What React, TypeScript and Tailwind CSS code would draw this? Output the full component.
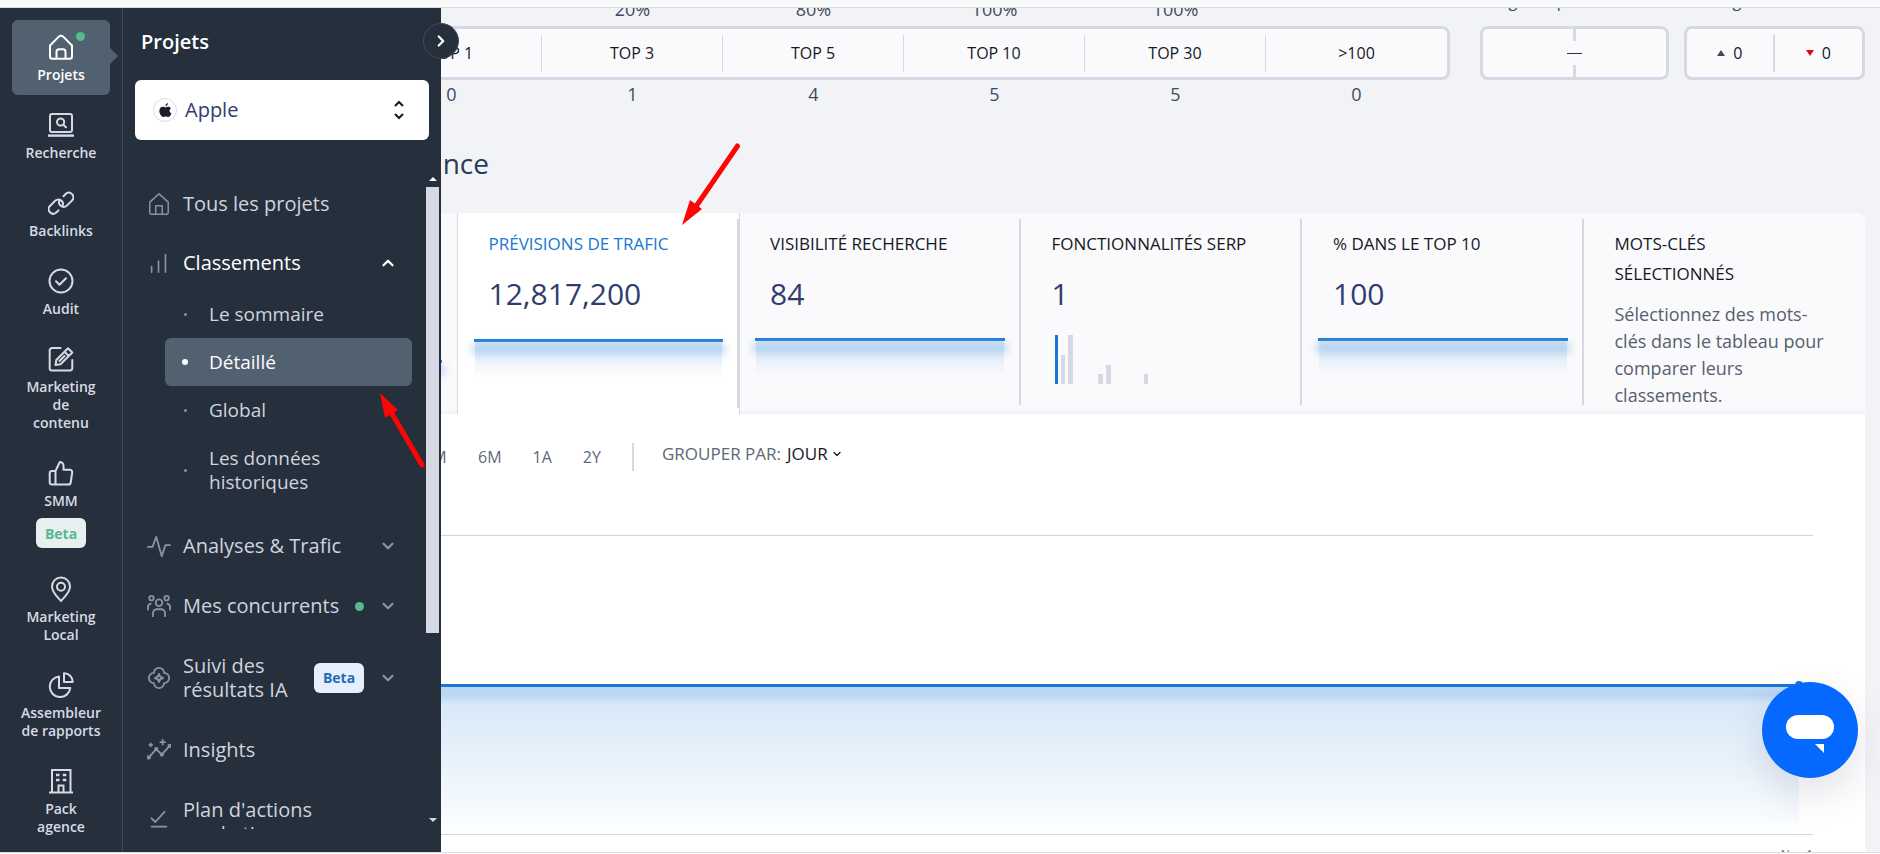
import type { ReactNode } from 'react';
import { ChevronDown, ChevronRight, ChevronUp } from 'lucide-react';

const Icon = ({ size = 26, width = 1.8, children }: { size?: number; width?: number; children: ReactNode }) => (
  <svg
    width={size}
    height={size}
    viewBox="0 0 26 26"
    fill="none"
    stroke="currentColor"
    strokeWidth={width}
    strokeLinecap="round"
    strokeLinejoin="round"
    aria-hidden="true"
    className="shrink-0"
  >
    {children}
  </svg>
);

const railItems = [
  {
    label: 'Projets',
    active: true,
    icon: (
      <path d="M2 11.5 10.8 2.6a3 3 0 0 1 4.4 0L24 11.500V22.500a2.300 2.300 0 0 1-2.300 2.300H4.300A2.300 2.300 0 0 1 2 22.500ZM8.500 24.800v-7a2.500 2.500 0 0 1 2.500-2.500h4a2.500 2.500 0 0 1 2.500 2.500v7" />
    ),
  },
  {
    label: 'Recherche',
    icon: (
      <>
        <rect x="2" y="2" width="22" height="18" rx="2" />
        <path d="M0 23.600h26" strokeLinecap="butt" strokeWidth="2.4" />
        <circle cx="12.600" cy="10" r="3.600" />
        <path d="m15.300 12.700 2.700 2.500" />
      </>
    ),
  },
  {
    label: 'Backlinks',
    icon: (
      <path d="M15.500 6.200 18 3.600a4.600 4.600 0 0 1 6.300 6.600l-5.500 5.400a4.600 4.600 0 0 1-6.600-.2 4 4 0 0 1-.8-4.400M10.500 20.400 8 22.800a4.600 4.600 0 0 1-6.300-6.600l5.500-5.400a4.600 4.600 0 0 1 6.600.2 4 4 0 0 1 .8 4.400" />
    ),
  },
  {
    label: 'Audit',
    icon: (
      <>
        <circle cx="13" cy="13" r="11.500" />
        <path d="m8 13.200 3.500 3.500 6.500-6.500" />
      </>
    ),
  },
  {
    label: 'Marketing\nde\ncontenu',
    icon: (
      <>
        <path d="M12.500 2H4a2.300 2.300 0 0 0-2.300 2.300v17.900A2.300 2.300 0 0 0 4 24.500h18a2.300 2.300 0 0 0 2.300-2.300V14" />
        <path d="m7.500 19 .8-5L20 2.300l4.300 4.200-11.800 11.700ZM16.500 5.800l4.300 4.200M11.500 15l5-5" />
      </>
    ),
  },
  {
    label: 'SMM',
    badge: 'Beta',
    icon: (
      <path d="M7.500 24.500H4a2.300 2.300 0 0 1-2.300-2.300v-9A2.300 2.300 0 0 1 4 11h3.500Zm0-13.500 4.300-9c2 0 3.700 1.500 3.700 3.600v4.200h6.400a2.300 2.300 0 0 1 2.300 2.700l-1.500 10a2.300 2.300 0 0 1-2.300 2H7.500" />
    ),
  },
  {
    label: 'Marketing\nLocal',
    icon: (
      <>
        <path d="M13 25c-1.500-2.200-9-8-9-14.500a9 9 0 0 1 18 0C22 17 14.500 22.800 13 25Z" />
        <circle cx="13" cy="10.800" r="4" />
      </>
    ),
  },
  {
    label: 'Assembleur\nde rapports',
    icon: (
      <>
        <path d="M11 4.500A10.300 10.300 0 1 0 22.300 16H11Z" />
        <path d="M16 1.200v8.700h8.700A8.700 8.700 0 0 0 16 1.200Z" />
      </>
    ),
  },
  {
    label: 'Pack\nagence',
    icon: (
      <>
        <path d="M4 24V2h18.500v22M1 24.500h24M10.500 24v-6.500h5V24" strokeLinejoin="miter" strokeLinecap="butt" />
        <path d="M8 7h3.500M14.800 7h3.500M8 12h3.500M14.800 12h3.500" strokeWidth="2.400" strokeLinecap="butt" />
      </>
    ),
  },
];

const subItems = [
  { label: 'Le sommaire' },
  { label: 'Détaillé', active: true },
  { label: 'Global' },
  { label: 'Les données historiques' },
];

const menuItems = [
  {
    label: 'Analyses & Trafic',
    chevron: true,
    icon: <path d="M1 14h5L10 3l6 21 4-12h5" />,
  },
  {
    label: 'Mes concurrents',
    chevron: true,
    dot: true,
    icon: (
      <>
        <circle cx="13" cy="9.500" r="3.600" />
        <circle cx="4.800" cy="4.500" r="2.400" />
        <circle cx="21.200" cy="4.500" r="2.400" />
        <path d="M6.500 24v-3.500a4 4 0 0 1 4-4h5a4 4 0 0 1 4 4V24M1 17v-2.500a4 4 0 0 1 3-4M25 17v-2.500a4 4 0 0 0-3-4" />
      </>
    ),
  },
  {
    label: 'Suivi des résultats IA',
    chevron: true,
    badge: 'Beta',
    icon: (
      <>
        <path d="M7.500 7.500a5.500 5.500 0 0 1 11 0 5.500 5.500 0 0 1 0 11 5.500 5.500 0 0 1-11 0 5.500 5.500 0 0 1 0-11Z" />
        <path d="M13 8.500c.5 3 1.500 4 4.500 4.500-3 .5-4 1.500-4.500 4.500-.5-3-1.500-4-4.500-4.500 3-.5 4-1.500 4.500-4.500Z" />
      </>
    ),
  },
  {
    label: 'Insights',
    icon: (
      <>
        <path d="m2 21 8-9 6 6 9-10M17 2v5M14.500 4.500h5M4 6v3M2.500 7.500h3" />
        <g fill="currentColor">
          <circle cx="2" cy="21" r="1.300" />
          <circle cx="10" cy="12" r="1.300" />
          <circle cx="16" cy="18" r="1.300" />
          <circle cx="24.500" cy="8.500" r="1.300" />
        </g>
      </>
    ),
  },
  {
    label: "Plan d'actions marketing",
    icon: <path d="m5 9 4 4 10-11M5 18h16M5 23h10" />,
  },
];

const positions = [
  { label: 'TOP 1', percent: '', count: '0' },
  { label: 'TOP 3', percent: '20%', count: '1' },
  { label: 'TOP 5', percent: '80%', count: '4' },
  { label: 'TOP 10', percent: '100%', count: '5' },
  { label: 'TOP 30', percent: '100%', count: '5' },
  { label: '>100', percent: '', count: '0' },
];

const ranges = ['3M', '6M', '1A', '2Y'];

const Rail = () => (
  <nav className="flex w-[123px] shrink-0 flex-col gap-[3px] border-r border-[#3f4a56] px-3 pt-3">
    {railItems.map((item) => (
      <a
        key={item.label}
        href="#"
        className={
          item.active
            ? 'relative flex w-[98px] shrink-0 flex-col items-center rounded-md bg-[#526170] pt-[14px] pb-[11px] text-white'
            : 'relative flex w-[98px] shrink-0 flex-col items-center pt-[14px] pb-[11px] text-[#d7dae5]'
        }
      >
        <Icon width={2}>{item.icon}</Icon>
        <span className="mt-[6px] text-center text-[14px] leading-[18px] font-semibold whitespace-pre-line">{item.label}</span>
        {item.badge && (
          <span className="mt-2 flex h-[30px] w-[50px] items-center justify-center rounded-md bg-[#e8f0ef] text-[14px] font-bold text-[#57b98d]">
            {item.badge}
          </span>
        )}
        {item.active && (
          <>
            <span className="absolute top-3 right-[25px] size-[9px] rounded-full bg-[#57b98d]" />
            <span className="absolute top-7 -right-2 border-y-8 border-l-8 border-y-transparent border-l-[#526170]" />
          </>
        )}
      </a>
    ))}
  </nav>
);

const Panel = () => (
  <div className="relative flex w-[318px] shrink-0 flex-col">
    <h2 className="mt-5 pl-[18px] text-[20px] leading-7 font-semibold text-white">Projets</h2>
    <button className="mt-6 mr-3 ml-3 flex h-[60px] items-center rounded-md bg-white pr-[23px] pl-[18px]">
      <span className="flex size-6 items-center justify-center rounded-full border border-[#d7dce2]">
        <svg width="13" height="15" viewBox="0 0 13 15" fill="#1b1e28" aria-hidden="true">
          <path d="M9 0c.1 1.500-1 3-2.500 3.200C6.300 1.700 7.500.3 9 0ZM12 5.200c-2 1.200-1.800 4.200.5 5.100-.6 1.700-1.700 3.700-3 3.700-1 0-1.500-.6-2.700-.6s-1.700.6-2.600.6C2.500 14 0 10.500.4 7.300.7 4.800 2.400 3.700 4 3.800c1 0 1.700.6 2.600.6.800 0 1.600-.7 2.900-.7 1 0 2 .6 2.500 1.500Z" />
        </svg>
      </span>
      <span className="ml-2 text-[20px] font-medium text-[#2f3d6e]">Apple</span>
      <svg className="ml-auto" width="14" height="20" viewBox="0 0 14 20" fill="none" stroke="#15191f" strokeWidth="2" aria-hidden="true">
        <path d="m3 6 4-4 4 4M3 14l4 4 4-4" />
      </svg>
    </button>
    <div className="mt-[34px] mb-[23px] flex min-h-0 flex-1">
      <div className="min-w-0 flex-1 overflow-hidden text-[20px] leading-6 font-medium text-[#d0d3df]">
        <a href="#" className="flex h-[60px] items-center pl-6">
          <span className="text-[#8b929d]">
            <Icon size={24} width={1.6}>
              <path d="M3 11 13 2l10 9v11.500a1.500 1.500 0 0 1-1.500 1.500h-17A1.500 1.500 0 0 1 3 22.500ZM9.500 24v-9h7v9" />
            </Icon>
          </span>
          <span className="ml-3">Tous les projets</span>
        </a>
        <button className="flex h-14 w-full items-center pt-[2px] pl-6 text-white">
          <span className="text-[#8b929d]">
            <Icon size={24}>
              <path d="M5 23v-6M12.500 23V11M20 23V4" />
            </Icon>
          </span>
          <span className="ml-3">Classements</span>
          <ChevronUp size={18} strokeWidth={3} className="mr-[29px] ml-auto" />
        </button>
        <ul className="mr-[14px] ml-[42px] text-[19px] font-normal">
          {subItems.map((item) => (
            <li key={item.label}>
              <a
                href="#"
                className={
                  item.active
                    ? 'flex min-h-12 items-center rounded-md bg-[#526170] py-3 pr-14 pl-[17px] font-medium text-white'
                    : 'flex min-h-12 items-center py-3 pr-14 pl-[17px]'
                }
              >
                <span className="flex w-[6px] shrink-0 justify-center">
                  <span className={item.active ? 'size-[6px] rounded-full bg-white' : 'size-[3px] rounded-full bg-[#8b929d]'} />
                </span>
                <span className="ml-[21px]">{item.label}</span>
              </a>
            </li>
          ))}
        </ul>
        <div className="mt-[10px]">
          {menuItems.map((item) => (
            <a key={item.label} href="#" className="flex min-h-[60px] items-center py-[18px] pr-[29px] pl-6">
              <span className="text-[#8b929d]">
                <Icon size={24} width={2}>{item.icon}</Icon>
              </span>
              <span className={item.badge ? 'ml-3 w-[115px]' : item.chevron ? 'ml-3 whitespace-nowrap' : 'ml-3 w-[150px]'}>
                {item.label}
              </span>
              {item.badge && (
                <span className="ml-auto flex h-[30px] w-[50px] items-center justify-center rounded-md bg-[#e5f0fa] text-[14px] font-bold text-[#2769bd]">
                  {item.badge}
                </span>
              )}
              {item.dot && <span className="ml-auto size-[9px] rounded-full bg-[#57b98d]" />}
              {item.chevron && (
                <ChevronDown size={18} strokeWidth={3} className={item.badge || item.dot ? 'ml-[15px] text-[#8b929d]' : 'ml-auto text-[#8b929d]'} />
              )}
            </a>
          ))}
        </div>
      </div>
      <div className="mr-[2px] flex w-[13px] flex-col items-center">
        <span className="mt-[3px] border-x-4 border-b-4 border-x-transparent border-b-white" />
        <span className="mt-[6px] h-[446px] w-full bg-[#d6d8e4]" />
        <span className="mt-auto mb-[7px] border-x-4 border-t-4 border-x-transparent border-t-[#d6d8e4]" />
      </div>
    </div>
    <button
      aria-label="Ouvrir le menu"
      className="absolute top-[15px] -right-[18px] flex size-9 items-center justify-center rounded-full border border-[#3f4a56] bg-[#25303c] text-white"
    >
      <ChevronRight size={18} strokeWidth={3} />
    </button>
  </div>
);

const Positions = () => (
  <section className="flex">
    <div className="ml-[182px] flex-1">
      <div className="grid grid-cols-6 px-[3px] text-center text-[18px] leading-[26px] text-[#3f4a5c]">
        {positions.map((p) => (
          <span key={p.label} className="h-[26px]">{p.percent}</span>
        ))}
      </div>
      <div className="mt-1 grid h-[54px] grid-cols-6 items-center rounded-lg border-[3px] border-[#d6d8e4] bg-[#fafafc] text-center text-[16px] font-medium text-[#15191f]">
        {positions.map((p) => (
          <span key={p.label} className="border-r border-[#d6d8e4] leading-[37px] last:border-0">{p.label}</span>
        ))}
      </div>
      <div className="mt-[2px] mb-px grid grid-cols-6 px-[3px] text-center text-[18px] leading-6 text-[#3f4a5c]">
        {positions.map((p) => (
          <span key={p.label}>{p.count}</span>
        ))}
      </div>
    </div>
    <div className="ml-[30px] w-[189px]">
      <p className="h-[30px] pl-[10px] text-[16px] leading-[10px] text-[#3f4a5c]">Pages importées</p>
      <div className="flex h-[54px] flex-col items-center justify-between rounded-lg border-[3px] border-[#d6d8e4] bg-[#fafafc]">
        <span className="h-3 w-[3px] bg-[#d6d8e4]" />
        <span className="h-px w-[15px] bg-[#2a3442]" />
        <span className="h-3 w-[3px] bg-[#d6d8e4]" />
      </div>
    </div>
    <div className="ml-[15px] w-[181px]">
      <p className="h-[30px] pl-[10px] text-[16px] leading-[10px] text-[#3f4a5c]">Changements</p>
      <div className="grid h-[54px] grid-cols-2 items-center rounded-lg border-[3px] border-[#d6d8e4] bg-[#fafafc] text-[16px] font-medium text-[#15191f]">
        <span className="flex items-center justify-center gap-2 border-r-2 border-[#d6d8e4] leading-[37px]">
          <span className="border-x-4 border-b-[6px] border-x-transparent border-b-[#3f4a52]" />
          0
        </span>
        <span className="flex items-center justify-center gap-2 leading-[37px]">
          <span className="border-x-4 border-t-[6px] border-x-transparent border-t-[#d40c12]" />
          0
        </span>
      </div>
    </div>
  </section>
);

const Sparkline = () => (
  <div className="relative mx-4 h-[38px] border-t-[3px] border-[#1976d2]">
    <span className="absolute inset-x-px top-0 bottom-0 bg-gradient-to-b from-[#d3e5f7] to-transparent" />
    <span className="absolute -inset-x-[2px] top-[3px] h-2 bg-[#a9cdf0] blur-[4px]" />
  </div>
);

const Card = ({ title, value, active, last, children }: { title: string; value?: string; active?: boolean; last?: boolean; children?: ReactNode }) => (
  <button
    className={
      active
        ? 'relative z-10 -mr-px -ml-px -mb-[3px] flex flex-col border-x border-[#d6d8e4] bg-white pt-4 text-left'
        : 'relative flex flex-col pt-4 text-left'
    }
  >
    <span
      className={
        active
          ? 'pl-[31px] text-[17px] leading-[30px] font-medium text-[#1976d2]'
          : 'pl-[31px] text-[17px] leading-[30px] font-medium whitespace-nowrap text-[#15191f]'
      }
    >
      {title}
    </span>
    {value && <span className="mt-[15px] mb-px pl-[31px] text-[30px] leading-10 font-medium text-[#2f3d6e]">{value}</span>}
    {children}
    {!last && <span className="absolute top-[6px] right-0 bottom-[6px] w-[2px] bg-[#d6d8e4]" />}
  </button>
);

const SerpBars = () => (
  <svg width="110" height="50" viewBox="0 0 110 50" className="ml-[30px]" aria-hidden="true">
    <rect x="4" width="3" height="49" fill="#1976d2" />
    <g fill="#d6d8e4">
      <rect x="10" y="20" width="4" height="29" />
      <rect x="17" width="5" height="49" />
      <rect x="47" y="39" width="5" height="10" />
      <rect x="55" y="30" width="5" height="19" />
      <rect x="93" y="39" width="4" height="10" />
    </g>
  </svg>
);

const Performance = () => (
  <section className="flex min-h-0 flex-1 flex-col">
    <h2 className="mt-9 w-[313px] text-right text-[28px] leading-10 text-[#2b3a57]">Performance</h2>
    <div className="mt-[30px] flex min-h-0 flex-1 flex-col overflow-hidden rounded-t-lg bg-white">
      <div className="grid h-[201px] shrink-0 grid-cols-6 border-b-[3px] border-[#f2f3f7] bg-[#fafafc]">
        <Card title="" last>
          <div className="mt-[131px] w-full">
            <Sparkline />
          </div>
        </Card>
        <Card title="PRÉVISIONS DE TRAFIC" value="12,817,200" active>
          <div className="mt-6 w-full">
            <Sparkline />
          </div>
        </Card>
        <Card title="VISIBILITÉ RECHERCHE" value="84">
          <div className="mt-[23px] w-full">
            <Sparkline />
          </div>
        </Card>
        <Card title="FONCTIONNALITÉS SERP" value="1">
          <div className="mt-5">
            <SerpBars />
          </div>
        </Card>
        <Card title="% DANS LE TOP 10" value="100">
          <div className="mt-[23px] w-full">
            <Sparkline />
          </div>
        </Card>
        <div className="pt-4 pr-9 pl-[31px]">
          <h3 className="w-[160px] text-[17px] leading-[30px] font-medium text-[#15191f]">MOTS-CLÉS SÉLECTIONNÉS</h3>
          <p className="mt-3 text-[18px] leading-[27px] text-[#566070]">
            Sélectionnez des mots-clés dans le tableau pour comparer leurs classements.
          </p>
        </div>
      </div>
      <div className="mt-7 flex h-[30px] items-center pl-[247px] text-[16px] text-[#5d6878]">
        <div className="flex w-[180px] gap-[31px]">
          {ranges.map((range) => (
            <button key={range} className="first:w-6">{range}</button>
          ))}
        </div>
        <span className="ml-[29px] h-7 w-[2px] bg-[#d6d8e4]" />
        <div className="ml-7 flex items-center pb-[6px] text-[17px]">
          <span>GROUPER PAR:</span>
          <button className="ml-[6px] flex items-center gap-[3px] font-medium text-[#15191f]">
            JOUR
            <ChevronDown size={12} strokeWidth={2.5} />
          </button>
        </div>
      </div>
      <div className="relative mt-[63px] mr-[52px] h-[300px] shrink-0 border-y border-[#cfd4e3]">
        <svg className="absolute inset-0 h-full w-full" aria-hidden="true">
          <defs>
            <linearGradient id="area" x1="0" y1="0" x2="0" y2="1">
              <stop offset="0" stopColor="#c2dbf4" />
              <stop offset="0.06" stopColor="#b8d5f2" />
              <stop offset="0.13" stopColor="#d9e9f8" />
              <stop offset="1" stopColor="#fdfeff" />
            </linearGradient>
          </defs>
          <rect x="-14" y="149" width="100%" height="149" fill="url(#area)" />
          <rect x="-14" y="148" width="100%" height="3" fill="#1976d2" />
        </svg>
        <span className="absolute top-[145px] right-[10px] size-2 rounded-full bg-[#1976d2]" />
      </div>
      <div className="mr-[52px] shrink-0 pt-3 text-right text-[12px] leading-4 text-[#5d6878]">Nov 1</div>
    </div>
  </section>
);

const App = () => (
  <div className="flex h-screen flex-col overflow-hidden bg-[#f2f3f7] font-['Open_Sans',sans-serif]">
    <header className="h-2 shrink-0 border-b border-[#d9dbde] bg-[#f8f9f9]" />
    <div className="flex min-h-0 flex-1">
      <aside className="relative z-20 flex shrink-0 bg-[#25303c]">
        <div className="flex overflow-hidden">
          <Rail />
        </div>
        <Panel />
      </aside>
      <main className="min-w-0 flex-1 overflow-hidden pr-[15px]">
        <div className="-mt-3 -ml-[265px] flex h-[calc(100%+12px)] flex-col">
          <Positions />
          <Performance />
        </div>
      </main>
    </div>
    <footer className="h-[2px] shrink-0 border-t border-[#d9dbde] bg-white" />

    <button
      aria-label="Chat"
      className="fixed right-[22px] bottom-[76px] z-30 size-24 rounded-full bg-[#0569ff] shadow-[0_16px_40px_rgba(0,20,60,0.12)]"
    >
      <svg viewBox="0 0 96 96" fill="#fff" aria-hidden="true">
        <rect x="24" y="33" width="48" height="24" rx="12" />
        <path d="M53 62h9v9Z" />
      </svg>
    </button>

    {/* annotation arrows */}
    <svg className="pointer-events-none fixed top-[143px] left-[681px] z-30" width="60" height="84" viewBox="0 0 60 84" fill="#fe0404" aria-hidden="true">
      <path d="M56.500 3 16 62" stroke="#fe0404" strokeWidth="5" strokeLinecap="round" />
      <path d="m1 82 8-25 12 9Z" />
    </svg>
    <svg className="pointer-events-none fixed top-[392px] left-[379px] z-30" width="48" height="78" viewBox="0 0 48 78" fill="#fe0404" aria-hidden="true">
      <path d="M43 73 12 20" stroke="#fe0404" strokeWidth="5" strokeLinecap="round" />
      <path d="m1 1 18 17-13 8Z" />
    </svg>
  </div>
);

export default App;
